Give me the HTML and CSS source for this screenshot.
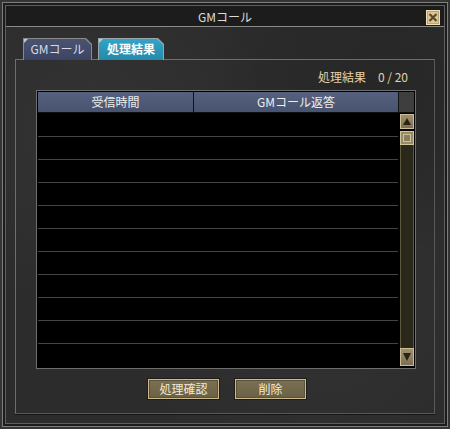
FILE: index.html
```html
<!DOCTYPE html>
<html lang="ja">
<head>
<meta charset="utf-8">
<title>GMコール</title>
<link rel="stylesheet" href="styles.css">
</head>
<body>
<div class="window">
  <div class="titlebar">
    <span></span>
    <span class="title">GMコール</span>
    <button class="close" aria-label="閉じる">
      <svg width="14" height="15" viewBox="0 0 14 15"><rect x="0.5" y="0.5" width="13" height="14" fill="#b9a474" stroke="#f0e2b4"/><rect x="2" y="2" width="10" height="11" fill="#d8c898"/><path d="M3.5 4 L10.5 11 M10.5 4 L3.5 11" stroke="#5a4a2a" stroke-width="2.2"/></svg>
    </button>
  </div>
  <div class="tabs">
    <div class="tab"><div class="tab-in">GMコール</div></div>
    <div class="tab active"><div class="tab-in">処理結果</div></div>
  </div>
  <div class="panel">
    <div class="count"><span>処理結果</span><span class="num">0 / 20</span></div>
    <div class="table">
      <div class="thead">
        <div class="th">受信時間</div>
        <div class="th">GMコール返答</div>
        <div class="th blank"></div>
      </div>
      <div class="tbody">
        <div class="rows">
          <div class="row"></div><div class="row"></div><div class="row"></div><div class="row"></div>
          <div class="row"></div><div class="row"></div><div class="row"></div><div class="row"></div>
          <div class="row"></div><div class="row"></div><div class="row"></div>
        </div>
        <div class="scrollbar">
          <div class="sb-btn up"><svg width="14" height="15" viewBox="0 0 14 15"><path d="M7 4 L11 11 L3 11 Z" fill="#2a2214"/></svg></div>
          <div class="sb-thumb"><div class="thumb-in"></div></div>
          <div class="sb-track"></div>
          <div class="sb-btn down"><svg width="14" height="18" viewBox="0 0 14 18"><path d="M3 5 L11 5 L7 13 Z" fill="#2a2214"/></svg></div>
        </div>
      </div>
    </div>
    <div class="actions">
      <button class="btn">処理確認</button>
      <button class="btn">削除</button>
    </div>
  </div>
</div>
</body>
</html>
```
FILE: styles.css
```css
* { box-sizing: border-box; margin: 0; padding: 0; }
body {
  width: 450px; height: 429px; overflow: hidden; background: #000;
  font-family: "Noto Sans CJK JP", "Noto Sans", sans-serif; font-size: 12px;
}
.window {
  width: 450px; height: 429px;
  display: flex; flex-direction: column;
  background:
    radial-gradient(circle at 20% 30%, rgba(255,255,255,0.035), transparent 40%),
    radial-gradient(circle at 70% 70%, rgba(255,255,255,0.03), transparent 45%),
    radial-gradient(circle at 85% 20%, rgba(0,0,0,0.12), transparent 35%),
    #2c2c2c;
  box-shadow: inset 0 0 0 2px #353535, inset 0 0 0 3px #7e7e7e, inset 0 0 0 5px #1c1c1c, inset 0 0 0 6px #5e5e5e;
}
.titlebar {
  margin: 6px 6px 0; height: 21px;
  background: #1c1c1c;
  border-bottom: 1px solid #8a8a8a;
  display: grid; grid-template-columns: 1fr auto 1fr; align-items: center;
}
.title { color: #dcdcdc; font-size: 12px; line-height: 14px; padding-top: 1px; }
.close {
  justify-self: end; margin-right: 4px; margin-top: 2px;
  width: 14px; height: 15px; border: 0; background: none; display: block;
}
.close svg { display: block; }
.tabs {
  margin: 11px 0 -1px 23px; display: flex; gap: 6px; height: 22px;
  position: relative; z-index: 1;
}
.tab {
  height: 22px; padding: 1px 1px 0;
  background: #8a8a8a;
  clip-path: polygon(0 0, calc(100% - 6px) 0, 100% 6px, 100% 100%, 0 100%);
  width: 69px;
}
.tab.active { width: 66px; background: #9aa6aa; }
.tab-in {
  height: 21px;
  clip-path: polygon(0 0, calc(100% - 6px) 0, 100% 6px, 100% 100%, 0 100%);
  background: linear-gradient(#4a5372, #3b4463);
  color: #d8dae4; text-align: center; line-height: 20px; font-size: 12px;
  position: relative;
}
.tab-in::before {
  content: ""; position: absolute; left: 0; top: 0;
  border-top: 4px solid #c8c8c8; border-right: 4px solid transparent;
}
.tab.active .tab-in {
  background: linear-gradient(#34a4c6, #2589ab);
  color: #ffffff; font-weight: bold;
}
.panel {
  margin: 0 15px; height: 355px; flex: none;
  border: 1px solid #6e6e6e; border-right-color: #585858; border-bottom-color: #585858;
  box-shadow: 0 1px 0 #161616;
  padding: 0 18px 0 20px;
  display: flex; flex-direction: column;
}
.count {
  padding: 10px 8px 0 0; height: 30px; line-height: 14px;
  display: flex; justify-content: flex-end; gap: 12px;
  color: #e4d2a6; font-size: 12px;
}
.table {
  border: 1px solid #6e6e6e; background: #000; padding: 1px;
}
.thead {
  display: grid; grid-template-columns: 155px 1fr 15px; gap: 1px;
  background: #141414; height: 21px; border-bottom: 1px solid #101010;
}
.th {
  background: linear-gradient(#56617f, #485370);
  color: #eeeeee; text-align: center; line-height: 20px; font-size: 12px;
}
.th.blank { background: #3e3e3e; }
.tbody { display: flex; height: 254px; }
.rows { flex: 1; padding-top: 1px; }
.row { height: 23px; border-bottom: 1px solid #444444; }
.row:last-child { border-bottom: 0; }
.scrollbar {
  width: 16px; padding-left: 2px;
  display: flex; flex-direction: column;
}
.sb-btn {
  width: 14px; background: linear-gradient(#a09270, #7c7052);
  border: 1px solid #cdbf94;
}
.sb-btn svg { display: block; margin: -1px; }
.sb-btn.up { height: 15px; margin-top: 1px; }
.sb-btn.down { height: 18px; margin-bottom: 1px; }
.sb-thumb {
  width: 14px; height: 14px; margin-top: 2px;
  background: #968a68; border: 1px solid #d2c49a; padding: 2px;
}
.thumb-in { width: 8px; height: 8px; border: 1px solid #cfc197; background: #8a7e5e; }
.sb-track {
  flex: 1; width: 14px; background: #2a271b;
  border-left: 1px solid #5e583e; border-right: 1px solid #5e583e;
}
.actions {
  margin-top: 9px; padding-left: 111px; display: flex; gap: 14px;
}
.btn {
  width: 73px; height: 22px;
  background: linear-gradient(#7c7152, #6a6046);
  border: 1px solid #1e1c14;
  box-shadow: inset 0 0 0 1px #cbbb8e, inset 0 0 0 2px #5a5238;
  color: #f2ead4; font-family: "Noto Sans CJK JP", "Noto Sans", sans-serif; font-size: 12px;
  line-height: 18px;
}
```
